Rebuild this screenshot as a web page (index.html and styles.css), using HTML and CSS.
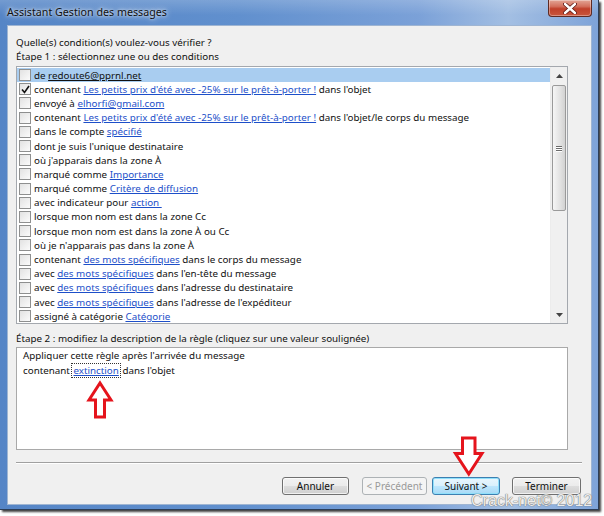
FILE: index.html
```html
<!DOCTYPE html>
<html lang="fr">
<head>
<meta charset="utf-8">
<title>Assistant Gestion des messages</title>
<link rel="stylesheet" href="styles.css">
</head>
<body>
<div class="window">
  <div class="titlebar">
    <span class="title">Assistant Gestion des messages</span>
    <div class="close">
      <svg width="14" height="11" viewBox="0 0 14 11"><path d="M2 1 L12 10 M12 1 L2 10" stroke="#5a1510" stroke-width="4" stroke-linecap="round"/><path d="M2 1 L12 10 M12 1 L2 10" stroke="#ffffff" stroke-width="2.4" stroke-linecap="round"/></svg>
    </div>
  </div>
  <div class="client">
    <div class="line">Quelle(s) condition(s) voulez-vous vérifier ?</div>
    <div class="line">Étape 1 : sélectionnez une ou des conditions</div>
    <div class="listbox">
      <div class="rows">
        <div class="row selected"><span class="cb"></span><span class="txt">de <span class="lk dark">redoute6@pprnl.net</span></span></div>
        <div class="row"><span class="cb"><svg width="9" height="9" viewBox="0 0 9 9"><path d="M1 4.5 L3.5 7.5 L8 1" fill="none" stroke="#111" stroke-width="1.6"/></svg></span><span class="txt">contenant <span class="lk">Les petits prix d'été avec -25% sur le prêt-à-porter !</span> dans l'objet</span></div>
        <div class="row"><span class="cb"></span><span class="txt">envoyé à <span class="lk">elhorfi@gmail.com</span></span></div>
        <div class="row"><span class="cb"></span><span class="txt">contenant <span class="lk">Les petits prix d'été avec -25% sur le prêt-à-porter !</span> dans l'objet/le corps du message</span></div>
        <div class="row"><span class="cb"></span><span class="txt">dans le compte <span class="lk">spécifié</span></span></div>
        <div class="row"><span class="cb"></span><span class="txt">dont je suis l'unique destinataire</span></div>
        <div class="row"><span class="cb"></span><span class="txt">où j'apparais dans la zone À</span></div>
        <div class="row"><span class="cb"></span><span class="txt">marqué comme <span class="lk">Importance</span></span></div>
        <div class="row"><span class="cb"></span><span class="txt">marqué comme <span class="lk">Critère de diffusion</span></span></div>
        <div class="row"><span class="cb"></span><span class="txt">avec indicateur pour <span class="lk">action&nbsp;</span></span></div>
        <div class="row"><span class="cb"></span><span class="txt">lorsque mon nom est dans la zone Cc</span></div>
        <div class="row"><span class="cb"></span><span class="txt">lorsque mon nom est dans la zone À ou Cc</span></div>
        <div class="row"><span class="cb"></span><span class="txt">où je n'apparais pas dans la zone À</span></div>
        <div class="row"><span class="cb"></span><span class="txt">contenant <span class="lk">des mots spécifiques</span> dans le corps du message</span></div>
        <div class="row"><span class="cb"></span><span class="txt">avec <span class="lk">des mots spécifiques</span> dans l'en-tête du message</span></div>
        <div class="row"><span class="cb"></span><span class="txt">avec <span class="lk">des mots spécifiques</span> dans l'adresse du destinataire</span></div>
        <div class="row"><span class="cb"></span><span class="txt">avec <span class="lk">des mots spécifiques</span> dans l'adresse de l'expéditeur</span></div>
        <div class="row"><span class="cb"></span><span class="txt">assigné à catégorie <span class="lk">Catégorie</span></span></div>
      </div>
      <div class="scrollbar">
        <div class="sb-btn"><svg width="7" height="4" viewBox="0 0 7 4"><path d="M0 4 L3.5 0 L7 4 Z" fill="#444"/></svg></div>
        <div class="sb-track">
          <div class="thumb"><span class="grip"></span><span class="grip"></span><span class="grip"></span></div>
        </div>
        <div class="sb-btn"><svg width="7" height="4" viewBox="0 0 7 4"><path d="M0 0 L7 0 L3.5 4 Z" fill="#444"/></svg></div>
      </div>
    </div>
    <div class="line step2">Étape 2 : modifiez la description de la règle (cliquez sur une valeur soulignée)</div>
    <div class="desc">
      <div class="dline">Appliquer cette règle après l'arrivée du message</div>
      <div class="dline">contenant <span class="focus"><span class="lk">extinction</span></span> dans l'objet</div>
    </div>
    <div class="sep"></div>
    <div class="buttons">
      <div class="btn annuler">Annuler</div>
      <div class="btn disabled">&lt; Précédent</div>
      <div class="btn default">Suivant &gt;</div>
      <div class="btn terminer">Terminer</div>
    </div>
  </div>
</div>

<svg class="arrow-up" width="30" height="42" viewBox="0 0 30 42"><path d="M15 3 L26 20 L19.5 20 L19.5 37 L10.5 37 L10.5 20 L4 20 Z" fill="#ffffff" stroke="#e5141c" stroke-width="3" stroke-linejoin="miter"/></svg>
<svg class="arrow-down" width="40" height="46" viewBox="0 0 40 46"><path d="M15.5 4 L28 4 L28 19.5 L35 19.5 L21.8 40 L8.5 19.5 L15.5 19.5 Z" fill="#ffffff" stroke="#e5141c" stroke-width="3" stroke-linejoin="miter"/></svg>
<div class="watermark">Crack-net© 2012</div>
</body>
</html>
```
FILE: styles.css
```css
html, body {
  margin: 0;
  padding: 0;
  background: #ffffff;
  width: 604px;
  height: 516px;
  overflow: hidden;
  font-family: "Noto Sans", "Open Sans", sans-serif;
  font-size: 9.8px;
  color: #111;
}

.window {
  width: 598px;
  height: 509px;
  background: linear-gradient(to right, #5585c6 0%, #6190ce 40%, #7ba1d8 70%, #a3bfe3 85%, #7ea3d8 100%);
  border-right: 1px solid #2c3e58;
  border-bottom: 1px solid #2c3e58;
  box-shadow: 2px 2px 2px rgba(0,0,0,0.75);
  display: flex;
  flex-direction: column;
}

.titlebar {
  height: 25px;
  display: flex;
  align-items: center;
  padding-left: 7px;
  position: relative;
  background: linear-gradient(to bottom, rgba(255,255,255,0.18), rgba(255,255,255,0) 60%);
}

.title {
  font-size: 10.7px;
  color: #101010;
  text-shadow: 0 0 6px rgba(255,255,255,0.9), 0 0 3px rgba(255,255,255,0.8);
  margin-top: -2px;
}

.close {
  position: absolute;
  top: 0;
  left: 548px;
  width: 42px;
  height: 16px;
  border: 1px solid #5e2a23;
  border-top: none;
  border-radius: 0 0 4px 4px;
  background: linear-gradient(to bottom, #e3a696 0%, #d3705d 40%, #c0402a 55%, #c8563d 100%);
  display: flex;
  align-items: center;
  justify-content: center;
  box-shadow: inset 0 0 0 1px rgba(255,255,255,0.35);
}

.client {
  margin: 0 6px 4px 7px;
  flex: 1;
  background: #f0f0f0;
  border: 1px solid #9fb5d2;
  padding-left: 8px;
  padding-top: 10px;
  display: flex;
  flex-direction: column;
  position: relative;
}

.line {
  line-height: 14px;
  height: 14px;
  white-space: nowrap;
}

.listbox {
  margin-top: 2px;
  width: 550px;
  height: 256px;
  border: 1px solid #a4a8ae;
  background: #fff;
  display: flex;
}

.rows {
  flex: 1;
  padding-top: 1px;
  overflow: hidden;
}

.row {
  height: 14.2px;
  display: flex;
  align-items: center;
  padding-left: 2px;
  white-space: nowrap;
}

.txt {
  white-space: pre;
}

.row.selected {
  background: #a9cdf0;
}

.cb {
  width: 10px;
  height: 10px;
  border: 1px solid #8e8f8f;
  background: linear-gradient(135deg, #e2e2e2, #fbfbfb);
  margin-right: 3px;
  flex: none;
  display: flex;
  align-items: center;
  justify-content: center;
}

.lk {
  color: #1d4fc9;
  text-decoration: underline;
  white-space: pre;
}

.lk.dark {
  color: #111;
}

.scrollbar {
  width: 16px;
  background: #f0f0f0;
  border-left: 1px solid #ececec;
  display: flex;
  flex-direction: column;
}

.sb-btn {
  height: 17px;
  display: flex;
  align-items: center;
  justify-content: center;
}

.sb-track {
  flex: 1;
  padding: 1px 1px 0 1px;
}

.thumb {
  height: 124px;
  border: 1px solid #9a9a9a;
  border-radius: 2px;
  background: linear-gradient(to right, #f6f6f6, #e2e2e2 60%, #d2d2d2);
  display: flex;
  flex-direction: column;
  align-items: center;
  justify-content: center;
  gap: 1px;
}

.grip {
  width: 6px;
  height: 1px;
  background: #6c6c6c;
  box-shadow: 0 1px 0 #fff;
}

.step2 {
  margin-top: 8px;
}

.desc {
  margin-top: 1px;
  width: 544px;
  height: 101px;
  border: 1px solid #a9a9a9;
  background: #fff;
  padding-left: 6px;
}

.dline {
  line-height: 15px;
  height: 15px;
  white-space: pre;
}

.focus {
  outline: 1px dotted #333;
  outline-offset: 0;
  padding: 0 1px;
}

.sep {
  margin-top: 12px;
  width: 566px;
  height: 1px;
  background: #a0a0a0;
  border-bottom: 1px solid #ffffff;
}

.buttons {
  margin-top: 13px;
  display: flex;
  padding-left: 266px;
}

.btn {
  height: 16px;
  border: 1px solid #707070;
  border-radius: 3px;
  background: linear-gradient(to bottom, #f2f2f2 0%, #ebebeb 50%, #dddddd 51%, #cfcfcf 100%);
  box-shadow: inset 0 0 0 1px rgba(255,255,255,0.7);
  display: flex;
  align-items: center;
  justify-content: center;
  font-size: 10px;
  color: #111;
}

.annuler { width: 65px; }
.disabled {
  width: 63px;
  margin-left: 13px;
  border-color: #adb2b5;
  background: #f4f4f4;
  color: #9a9a9a;
  box-shadow: none;
}
.default {
  width: 66px;
  margin-left: 5px;
  border-color: #3c7fb1;
  background: linear-gradient(to bottom, #eaf6fd 0%, #d9f0fc 50%, #bee6fd 51%, #a7d9f5 100%);
  box-shadow: inset 0 0 0 1px #8fe0fb;
}
.terminer {
  width: 67px;
  margin-left: 12px;
}

.arrow-up {
  position: absolute;
  left: 85px;
  top: 380px;
}

.arrow-down {
  position: absolute;
  left: 447px;
  top: 434px;
}

.watermark {
  position: absolute;
  left: 471px;
  top: 492px;
  font-family: "Liberation Sans", Arial, sans-serif;
  font-size: 16px;
  line-height: 18px;
  color: #ececec;
  text-shadow: 0 0 1px #6a6a6a, 0 0 1px #6a6a6a;
  white-space: nowrap;
}
```
